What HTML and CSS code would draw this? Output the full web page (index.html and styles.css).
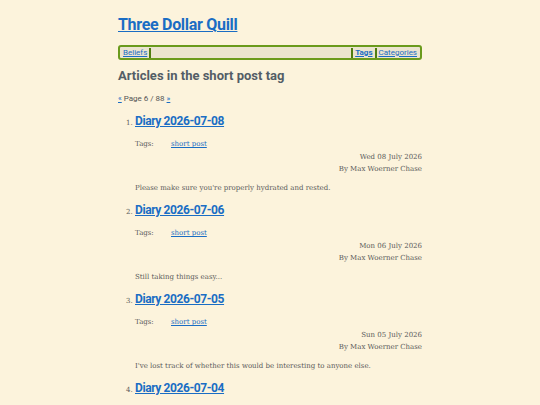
FILE: index.html
```html
<!DOCTYPE html>
<html lang="en">
<head>
<meta charset="utf-8">
<title>Articles in the short post tag</title>
<link rel="stylesheet" href="styles.css">
</head>
<body>
<div class="page">
  <header>
    <h1 class="site-title"><a href="#">Three Dollar Quill</a></h1>
    <nav class="menu">
      <div class="menu-group">
        <a href="#">Beliefs</a><span class="sep"></span>
      </div>
      <div class="menu-group">
        <span class="sep"></span><a href="#" class="active">Tags</a><span class="sep"></span><a href="#">Categories</a>
      </div>
    </nav>
  </header>
  <h2 class="page-heading">Articles in the short post tag</h2>
  <p class="pager"><a href="#">«</a> Page 6 / 88 <a href="#">»</a></p>
  <ol class="articles">
    <li>
      <h3 class="entry-title"><a href="#">Diary 2026-07-08</a></h3>
      <div class="tags"><span class="label">Tags:</span><a href="#">short post</a></div>
      <div class="meta"><div>Wed 08 July 2026</div><div>By Max Woerner Chase</div></div>
      <p class="summary">Please make sure you're properly hydrated and rested.</p>
    </li>
    <li>
      <h3 class="entry-title"><a href="#">Diary 2026-07-06</a></h3>
      <div class="tags"><span class="label">Tags:</span><a href="#">short post</a></div>
      <div class="meta"><div>Mon 06 July 2026</div><div>By Max Woerner Chase</div></div>
      <p class="summary">Still taking things easy...</p>
    </li>
    <li>
      <h3 class="entry-title"><a href="#">Diary 2026-07-05</a></h3>
      <div class="tags"><span class="label">Tags:</span><a href="#">short post</a></div>
      <div class="meta"><div>Sun 05 July 2026</div><div>By Max Woerner Chase</div></div>
      <p class="summary">I've lost track of whether this would be interesting to anyone else.</p>
    </li>
    <li>
      <h3 class="entry-title"><a href="#">Diary 2026-07-04</a></h3>
    </li>
  </ol>
</div>
</body>
</html>
```
FILE: styles.css
```css
html, body {
  margin: 0;
  padding: 0;
  background: #fcf3dc;
}
body {
  font-family: "DejaVu Serif", serif;
  font-size: 7px;
  color: #5a5a5a;
  overflow: hidden;
}
a {
  color: #1a6dc4;
}
.page {
  width: 304px;
  margin: 0 auto;
}
.site-title {
  margin: 13px 0 0;
  font: bold 16px/24px Roboto, sans-serif;
  letter-spacing: -0.3px;
}
.menu {
  margin-top: 8px;
  height: 11px;
  border: 2px solid #6a9a1c;
  border-radius: 3px;
  background: #ebe4cf;
  display: flex;
  justify-content: space-between;
  align-items: center;
  padding: 0 3px 0 3px;
  font: 8px/11px Roboto, sans-serif;
}
.menu-group {
  display: flex;
  align-items: center;
  gap: 2px;
}
.menu .active {
  font-weight: bold;
}
.sep {
  width: 2px;
  height: 10px;
  background: #4f7d10;
}
.page-heading {
  margin: 7px 0 0;
  font: bold 13px/18px Roboto, sans-serif;
  color: #535d66;
}
.pager {
  margin: 8px 0 0;
  font: 8px/12px Roboto, sans-serif;
  color: #555;
}
.articles {
  margin: 7px 0 0;
  padding: 0 0 0 17px;
}
.articles li {
  margin-top: 7px;
}
.articles li:first-child {
  margin-top: 0;
}
.articles li::marker {
  font-family: "DejaVu Serif", serif;
  font-size: 7px;
}
.entry-title {
  margin: 0;
  font: bold 12px/18px Roboto, sans-serif;
  letter-spacing: -0.4px;
}
.tags {
  margin-top: 8px;
  line-height: 12px;
}
.tags .label {
  display: inline-block;
  width: 36px;
}
.meta {
  margin-top: 1px;
  text-align: right;
  line-height: 12px;
}
.summary {
  margin: 7px 0 0;
  line-height: 12px;
}
```
